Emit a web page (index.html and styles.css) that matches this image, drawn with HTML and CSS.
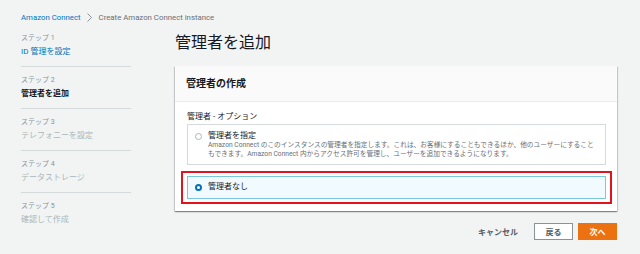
FILE: index.html
```html
<!DOCTYPE html>
<html lang="ja">
<head>
    <meta charset="UTF-8">
    <title>Create Amazon Connect instance</title>
    <link rel="stylesheet" href="styles.css">
</head>
<body>
    <div class="page">
        <nav class="crumbs">
            <a href="#">Amazon Connect</a>
            <svg class="chev" width="5" height="9" viewBox="0 0 5 9"><path d="M0.5 0.5l4 4-4 4" fill="none" stroke="#879596" stroke-width="1"/></svg>
            <span>Create Amazon Connect instance</span>
        </nav>

        <div class="layout">
            <ol class="steps">
                <li class="step done">
                    <div class="step-num">ステップ 1</div>
                    <a class="step-name" href="#">ID 管理を設定</a>
                </li>
                <li class="step current">
                    <div class="step-num">ステップ 2</div>
                    <div class="step-name">管理者を追加</div>
                </li>
                <li class="step">
                    <div class="step-num">ステップ 3</div>
                    <div class="step-name">テレフォニーを設定</div>
                </li>
                <li class="step">
                    <div class="step-num">ステップ 4</div>
                    <div class="step-name">データストレージ</div>
                </li>
                <li class="step">
                    <div class="step-num">ステップ 5</div>
                    <div class="step-name">確認して作成</div>
                </li>
            </ol>

            <main class="content">
                <h1>管理者を追加</h1>

                <div class="card">
                    <div class="card-head">管理者の作成</div>
                    <div class="card-body">
                        <div class="field-label">管理者 - オプション</div>

                        <label class="option">
                            <span class="radio"></span>
                            <span class="option-text">
                                <span class="option-title">管理者を指定</span>
                                <span class="option-desc">Amazon Connect のこのインスタンスの管理者を指定します。これは、お客様にすることもできるほか、他のユーザーにすること<br>もできます。Amazon Connect 内からアクセス許可を管理し、ユーザーを追加できるようになります。</span>
                            </span>
                        </label>

                        <div class="highlight">
                            <label class="option selected">
                                <span class="radio"></span>
                                <span class="option-text">
                                    <span class="option-title">管理者なし</span>
                                </span>
                            </label>
                        </div>
                    </div>
                </div>

                <div class="actions">
                    <button class="btn-link">キャンセル</button>
                    <button class="btn">戻る</button>
                    <button class="btn primary">次へ</button>
                </div>
            </main>
        </div>
    </div>
</body>
</html>
```

FILE: styles.css
```css
body {
    margin: 0;
    background-color: #f2f3f3;
    font-family: Roboto, "Noto Sans CJK JP", sans-serif;
    color: #16191f;
}
.page {
    padding: 11px 23px 0 21px;
}
.crumbs {
    display: flex;
    align-items: center;
    height: 12px;
    font-size: 7.8px;
    color: #687078;
}
.crumbs a {
    color: #0073bb;
    text-decoration: none;
}
.chev {
    margin: 0 7px 0 6px;
}
.layout {
    display: flex;
    gap: 44px;
    margin-top: 2px;
}
.steps {
    list-style: none;
    margin: 0;
    padding: 0;
    width: 110px;
    flex: none;
}
.step {
    padding: 7px 0 8px;
    border-top: 1px solid #d5dbdb;
}
.step:first-child {
    border-top: none;
    padding-top: 7px;
}
.step-num {
    font-size: 7px;
    line-height: 13px;
    color: #879596;
}
.step-name {
    display: block;
    font-size: 8px;
    line-height: 13px;
    color: #aab7b8;
    text-decoration: none;
}
.step.done .step-name {
    color: #0073bb;
}
.step.current .step-name {
    color: #16191f;
    font-weight: bold;
}
.content {
    flex: 1;
}
h1 {
    margin: 8px 0 13px;
    font-size: 16px;
    line-height: 20px;
    font-weight: normal;
    color: #16191f;
}
.card {
    background-color: white;
    box-shadow: 0 1px 1px 0 rgba(0,28,36,0.3), 1px 1px 1px 0 rgba(0,28,36,0.15), -1px 1px 1px 0 rgba(0,28,36,0.15);
}
.card-head {
    height: 36px;
    line-height: 36px;
    padding: 0 11px;
    background-color: #fafafa;
    border-bottom: 1px solid #eaeded;
    box-sizing: border-box;
    font-size: 10px;
    font-weight: bold;
}
.card-body {
    padding: 10px 11px 7px 12px;
}
.field-label {
    font-size: 8px;
    line-height: 10px;
    color: #16191f;
    margin-bottom: 2px;
}
.option {
    display: flex;
    align-items: flex-start;
    gap: 6px;
    padding: 6px 10px 5px 7px;
    border: 1px solid #d5dbdb;
    background-color: white;
}
.radio {
    flex: none;
    width: 7px;
    height: 7px;
    margin-top: 1.5px;
    border: 1px solid #aab7b8;
    border-radius: 50%;
    box-sizing: border-box;
    background-color: white;
}
.option-text {
    display: flex;
    flex-direction: column;
}
.option-title {
    font-size: 8px;
    line-height: 10px;
}
.option-desc {
    font-size: 6.7px;
    line-height: 9px;
    color: #687078;
    white-space: nowrap;
}
.highlight {
    margin: 6px -6px 0;
    padding: 3px 4px;
    border: 2px solid #e3121c;
}
.option.selected {
    padding: 5px 7px 6px;
    border-color: #7cc7e0;
    background-color: #f1faff;
}
.option.selected .radio {
    border: 2px solid #0073bb;
    background-color: white;
}
.actions {
    display: flex;
    justify-content: flex-end;
    align-items: center;
    gap: 5px;
    margin-top: 12px;
}
button {
    font-family: inherit;
    font-size: 8px;
    font-weight: bold;
    height: 17px;
    width: 39px;
    padding: 0;
    border: 1px solid #879596;
    background-color: white;
    color: #545b64;
}
.btn-link {
    width: auto;
    border: none;
    background: none;
    margin-right: 11px;
}
.primary {
    background-color: #ec7211;
    border-color: #ec7211;
    color: white;
}
```
